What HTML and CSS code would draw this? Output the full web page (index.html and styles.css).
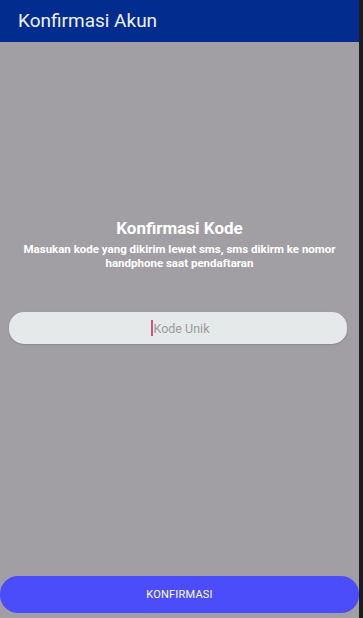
FILE: index.html
```html
<!DOCTYPE html>
<html>
<head>
    <meta charset="UTF-8">
    <title>Konfirmasi Akun</title>
    <link rel="stylesheet" href="styles.css">
</head>
<body>
    <div class="app">
        <div class="toolbar">Konfirmasi Akun</div>
        <div class="content">
            <div class="title">Konfirmasi Kode</div>
            <div class="subtitle">Masukan kode yang dikirim lewat sms, sms dikirm ke nomor handphone saat pendaftaran</div>
            <div class="code-input">
                <span class="caret"></span><span class="placeholder">Kode Unik</span>
            </div>
        </div>
        <button class="confirm-button">KONFIRMASI</button>
    </div>
    <div class="edge"></div>
</body>
</html>
```

FILE: styles.css
```css
body {
    margin: 0;
    width: 363px;
    height: 618px;
    overflow: hidden;
    display: flex;
    font-family: Roboto, "Noto Sans", sans-serif;
    background-color: #1c1c1e;
}

.app {
    width: 359px;
    height: 618px;
    display: flex;
    flex-direction: column;
    background-color: #a19fa3;
}

.edge {
    flex: 1;
    background-color: #1c1c1e;
}

.toolbar {
    height: 42px;
    flex-shrink: 0;
    box-sizing: border-box;
    padding: 9px 0 0 18px;
    background-color: #022c8e;
    color: #eef2fb;
    font-size: 19px;
    line-height: 24px;
}

.content {
    flex: 1;
    display: flex;
    flex-direction: column;
    align-items: center;
    padding-top: 176px;
}

.title {
    color: #ffffff;
    font-size: 17px;
    font-weight: bold;
    line-height: 21px;
}

.subtitle {
    width: 340px;
    margin-top: 3px;
    color: #ffffff;
    font-size: 11.5px;
    font-weight: bold;
    line-height: 14px;
    text-align: center;
}

.code-input {
    align-self: flex-start;
    width: 338px;
    height: 32px;
    margin: 42px 0 0 9px;
    border-radius: 15px;
    background-color: #e6e9ea;
    box-shadow: 0 1px 2px rgba(0,0,0,0.15);
    display: flex;
    align-items: center;
    justify-content: center;
}

.caret {
    width: 2px;
    height: 16px;
    margin-left: 4px;
    background-color: #d2537e;
}

.placeholder {
    color: #9b9b9d;
    font-size: 12.5px;
    margin-left: 1px;
}

.confirm-button {
    height: 37px;
    margin: 0 0 5px 0;
    flex-shrink: 0;
    border: none;
    border-radius: 18px;
    background-color: #4b4dfb;
    color: #ffffff;
    font-family: Roboto, "Noto Sans", sans-serif;
    font-size: 11px;
    letter-spacing: 0.2px;
}
```
